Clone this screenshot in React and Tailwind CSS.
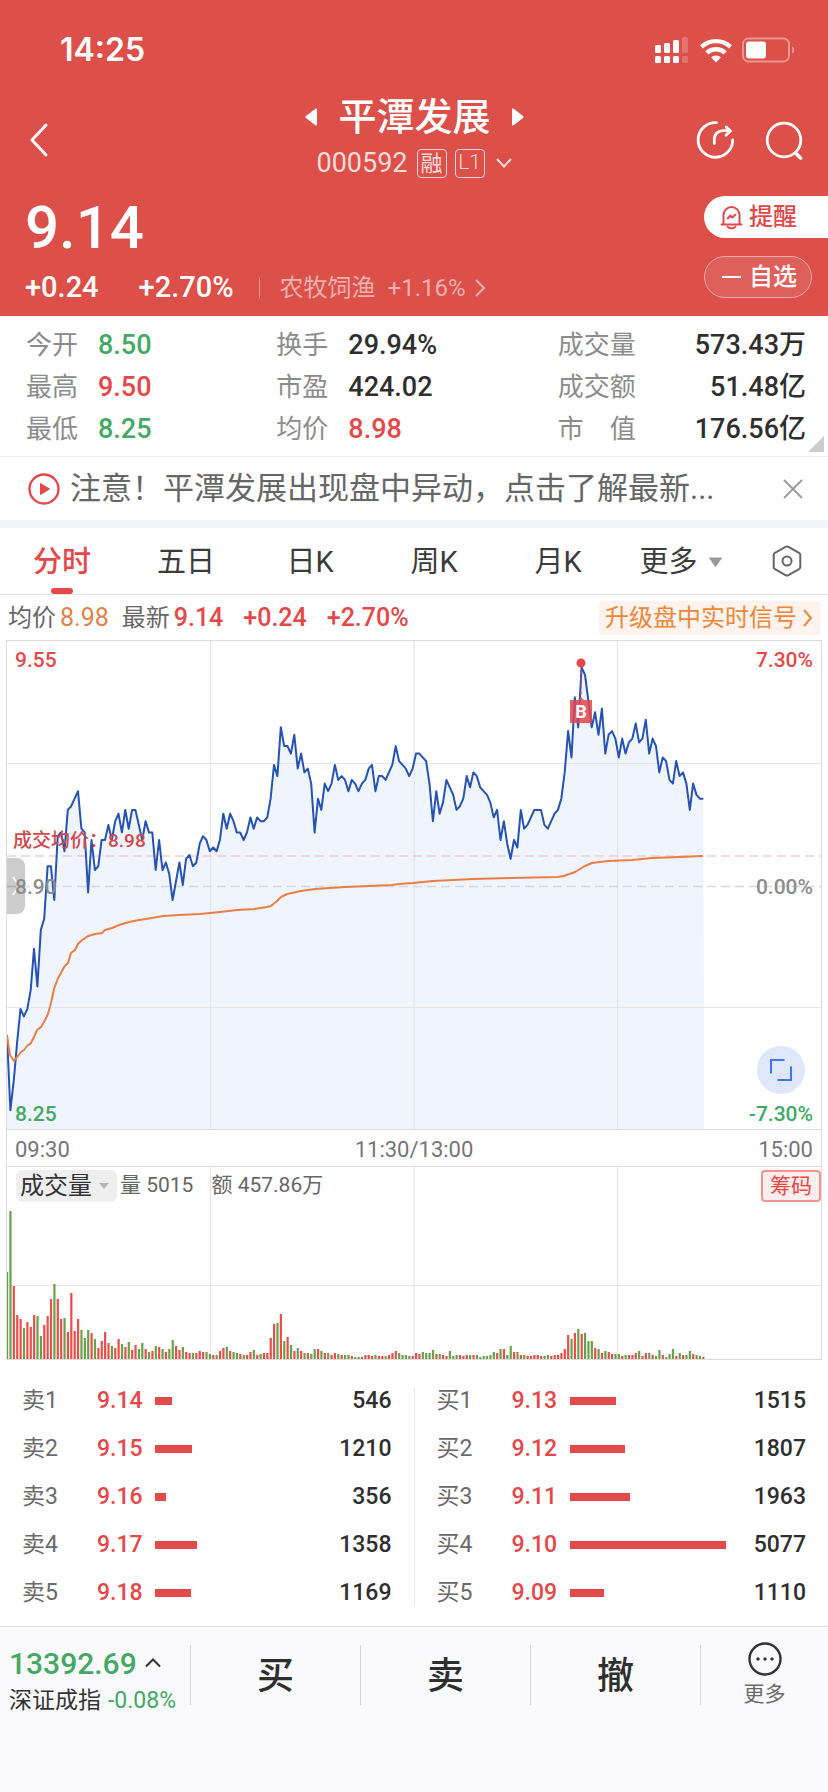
import { useState } from "react";

const CHART_W = 814;
const CHART_H = 488;
const STEP = 3.38;

// minute prices in cents
const prices = [
  850, 830, 838, 848, 857, 855, 857, 862, 873, 863, 878, 881, 895, 895, 886,
  903, 904, 899, 910, 911, 913, 915, 905, 904, 888, 902, 894, 895, 902, 902,
  906, 902, 907, 909, 904, 910, 905, 910, 910, 906, 902, 907, 904, 904, 894,
  902, 894, 896, 893, 886, 891, 896, 890, 897, 898, 895, 896, 901, 903, 902,
  899, 900, 899, 902, 909, 905, 909, 907, 904, 904, 902, 904, 908, 905, 908,
  907, 907, 908, 913, 922, 919, 932, 927, 927, 925, 930, 921, 925, 920, 921,
  917, 904, 913, 910, 917, 915, 917, 922, 918, 919, 918, 915, 918, 917, 915,
  917, 918, 921, 922, 915, 919, 919, 918, 920, 922, 927, 923, 922, 921, 919,
  921, 925, 925, 924, 923, 917, 907, 915, 909, 912, 918, 916, 914, 910, 911,
  913, 919, 916, 920, 919, 916, 915, 914, 912, 908, 910, 902, 907, 901, 897,
  902, 900, 910, 905, 906, 908, 910, 910, 910, 906, 905, 907, 909, 910, 913,
  920, 931, 924, 940, 932, 948, 946, 939, 932, 936, 930, 937, 925, 930, 931,
  929, 924, 929, 925, 928, 929, 933, 928, 929, 934, 925, 929, 927, 920, 924,
  923, 918, 917, 923, 919, 920, 917, 910, 917, 914, 913, 913,
];

const averageLine =
  "0,395 3,414 7,420 14,411 17,409 20,405 24,402 27,396 30,389 34,386 37,381 41,373 44,362 47,348 51,337 54,332 57,326 61,322 64,312 68,309 71,303 74,300 81,295 88,293 95,292 98,289 105,287 112,284 122,281 132,279 139,278 156,275 172,274 193,273 213,271 230,269 247,268 260,266 264,265 270,260 274,256 280,253 294,250 308,248 338,246 362,245 385,244 392,243 406,242 426,240 466,238 503,237 551,236 557,235 568,231 578,225 585,222 601,220 625,219 645,217 672,216 696,215";

// r = up minute, g = down minute
const volumes =
  "g87 g148 r73 r44 r40 g31 r37 r32 r44 g43 g23 r34 r43 r60 g75 r60 r40 g41 r27 r66 r28 r40 g29 g21 g29 r26 g20 r11 r18 r27 r16 g13 r11 r20 g15 r12 g17 r9 r14 g10 g16 r10 g7 r8 g13 r12 g10 r7 g10 g19 r13 r9 g12 r7 r6 g6 r6 r8 r7 g7 g5 r4 g4 r8 r11 g12 r8 g7 g6 r5 g4 r4 r7 g9 r4 g5 r6 r6 r21 r35 g36 r45 g18 r22 g14 r8 g11 r8 g6 r6 g5 g10 r10 g8 r6 g6 r4 r6 g5 r4 g4 g4 r3 g2 g2 r2 r4 r4 r3 g4 r3 r3 g3 r4 r6 r8 g6 g4 g4 g3 r3 r6 r5 g7 g6 g6 g9 r5 g5 r4 r3 g8 g3 g4 r4 r3 r4 g4 r4 g4 g2 g3 g3 g4 g7 r6 g10 r10 g4 g13 r7 g7 r4 g4 r3 r3 r4 r4 r3 g3 g4 r3 r4 r4 r6 r10 r24 g20 r26 g30 r25 g26 g18 g18 r11 g10 r6 g8 r7 r5 g5 g5 r3 g4 r4 r4 r6 g8 r3 r6 g6 r4 g3 g9 r4 g2 g5 g10 r3 g6 r4 g4 g8 r5 g4 g3 r2".split(
    " ",
  );

const stats = [
  { label: "今开", value: "8.50", color: "text-[#43a964]" },
  { label: "换手", value: "29.94%", color: "text-[#2f2f2f]" },
  { label: "成交量", value: "573.43万", color: "text-[#2f2f2f]" },
  { label: "最高", value: "9.50", color: "text-[#e54848]" },
  { label: "市盈", value: "424.02", color: "text-[#2f2f2f]" },
  { label: "成交额", value: "51.48亿", color: "text-[#2f2f2f]" },
  { label: "最低", value: "8.25", color: "text-[#43a964]" },
  { label: "均价", value: "8.98", color: "text-[#e54848]" },
  { label: "市　值", value: "176.56亿", color: "text-[#2f2f2f]" },
];

const sells = [
  { label: "卖1", price: "9.14", amount: 546 },
  { label: "卖2", price: "9.15", amount: 1210 },
  { label: "卖3", price: "9.16", amount: 356 },
  { label: "卖4", price: "9.17", amount: 1358 },
  { label: "卖5", price: "9.18", amount: 1169 },
];

const buys = [
  { label: "买1", price: "9.13", amount: 1515 },
  { label: "买2", price: "9.12", amount: 1807 },
  { label: "买3", price: "9.11", amount: 1963 },
  { label: "买4", price: "9.10", amount: 5077 },
  { label: "买5", price: "9.09", amount: 1110 },
];

function StatusBar() {
  return (
    <div className="flex items-center justify-between pt-7 pl-[60px] pr-8">
      <span className="font-['Inter',sans-serif] text-[32px] leading-[44px] font-semibold">
        14:25
      </span>
      <div className="flex items-center">
        <svg width="34" height="28" viewBox="0 0 34 28" fill="#fff">
          <rect x="0" y="9" width="6" height="8" rx="1.5" />
          <rect x="9" y="7" width="6" height="10" rx="1.5" />
          <rect x="18" y="4" width="6" height="13" rx="1.5" />
          <rect x="27" y="1" width="6" height="16" rx="1.5" opacity=".2" />
          <rect x="0" y="20" width="6" height="7" rx="1.5" />
          <rect x="9" y="20" width="6" height="7" rx="1.5" />
          <rect x="18" y="20" width="6" height="7" rx="1.5" />
          <rect x="27" y="20" width="6" height="7" rx="1.5" opacity=".2" />
        </svg>
        <svg
          className="ml-[10px]"
          width="34"
          height="26"
          viewBox="0 0 34 26"
          fill="#fff"
        >
          <path d="M1 8.2a23.5 23.5 0 0 1 32 0l-2.9 3.4a19 19 0 0 0-26.2 0z" />
          <path d="M6.3 14.2a15.8 15.8 0 0 1 21.4 0l-3 3.4a11.3 11.3 0 0 0-15.4 0z" />
          <path d="M12 20.2a7.8 7.8 0 0 1 10 0l-5 5.3z" />
        </svg>
        <svg
          className="ml-[9px]"
          width="54"
          height="26"
          viewBox="0 0 54 26"
          fill="none"
        >
          <rect
            x="1"
            y="1.5"
            width="46"
            height="23"
            rx="5.5"
            stroke="#fff"
            strokeOpacity=".4"
            strokeWidth="2"
          />
          <rect x="4" y="4.5" width="20" height="17" rx="3" fill="#fff" />
          <path d="M50 9.5c3 .8 3 6.2 0 7z" fill="#fff" opacity=".4" />
        </svg>
      </div>
    </div>
  );
}

function NavBar() {
  return (
    <div className="flex items-center justify-between pt-[22px] pl-7 pr-6">
      <button aria-label="返回" className="w-[105px]">
        <svg width="22" height="36" viewBox="0 0 22 36" fill="none">
          <path
            d="M18 3L4 18l14 15"
            stroke="#fff"
            strokeWidth="3"
            strokeLinecap="round"
            strokeLinejoin="round"
          />
        </svg>
      </button>
      <div className="flex flex-col items-center">
        <div className="flex items-center gap-5">
          <button aria-label="上一个">
            <svg width="13" height="18" viewBox="0 0 13 18" fill="#fff">
              <path d="M12 1.5v15a1 1 0 0 1-1.7.7L1 10a1.3 1.3 0 0 1 0-2L10.3.8A1 1 0 0 1 12 1.5z" />
            </svg>
          </button>
          <h1 className="text-[38px] leading-[46px] font-medium">平潭发展</h1>
          <button aria-label="下一个">
            <svg width="13" height="18" viewBox="0 0 13 18" fill="#fff">
              <path d="M1 1.5v15a1 1 0 0 0 1.7.7L12 10a1.3 1.3 0 0 0 0-2L2.7.8A1 1 0 0 0 1 1.5z" />
            </svg>
          </button>
        </div>
        <div className="flex h-[46px] items-center text-[#f8dcda]">
          <span className="text-[27px]">000592</span>
          <span className="ml-[9px] flex h-[29px] w-[30px] items-center justify-center rounded-sm border border-[#f6d2d0] text-[22px]">
            融
          </span>
          <span className="ml-2 flex h-[29px] w-[30px] items-center justify-center rounded-sm border border-[#f6d2d0] text-[21px] font-light">
            L1
          </span>
          <svg
            className="ml-[10px]"
            width="18"
            height="12"
            viewBox="0 0 18 12"
            fill="none"
          >
            <path d="M2 2l7 7.5L16 2" stroke="#f8dcda" strokeWidth="2" />
          </svg>
        </div>
      </div>
      <div className="flex items-center gap-[30px]">
        <button aria-label="分享">
          <svg
            width="39"
            height="40"
            viewBox="0 0 39 40"
            fill="none"
            stroke="#fff"
            strokeWidth="2.8"
            strokeLinecap="round"
            strokeLinejoin="round"
          >
            <path d="M20.5 2.7a17.3 17.3 0 1 0 16.2 17.2" />
            <path d="M18.3 23.5v-4c0-5.500 3.500-8.800 9-8.800h6" />
            <path d="M30.2 7l4.3 4-4.5 4.300" />
          </svg>
        </button>
        <button aria-label="搜索">
          <svg
            width="39"
            height="40"
            viewBox="0 0 39 40"
            fill="none"
            stroke="#fff"
            strokeLinecap="round"
          >
            <circle cx="19" cy="20" r="16.8" strokeWidth="2.8" />
            <path d="M31 33.5l4.500 4.500" strokeWidth="3.6" />
          </svg>
        </button>
      </div>
    </div>
  );
}

function PriceSummary() {
  return (
    <div className="flex items-start justify-between pb-[2px]">
      <div className="pt-2 pl-[25px]">
        <div className="text-[60px] leading-[68px] font-medium">9.14</div>
        <div className="flex h-[52px] items-center text-[29px] font-medium">
          <span>+0.24</span>
          <span className="ml-10">+2.70%</span>
          <span className="ml-[25px] h-5 w-px bg-[#eb9b97]"></span>
          <a
            href="#sector"
            className="ml-5 flex items-center text-2xl font-normal text-[#f0b1ae]"
          >
            <span>农牧饲渔</span>
            <span className="ml-3">+1.16%</span>
            <svg
              className="ml-2"
              width="12"
              height="20"
              viewBox="0 0 12 20"
              fill="none"
            >
              <path d="M2 2l8 8-8 8" stroke="#f0b1ae" strokeWidth="2" />
            </svg>
          </a>
        </div>
      </div>
      <div className="flex flex-col gap-[18px] pt-[10px]">
        <button className="flex h-[42px] w-[124px] items-center gap-[6px] rounded-l-full bg-white pl-4 text-2xl font-medium text-[#e0484a]">
          <svg
            width="23"
            height="25"
            viewBox="0 0 23 25"
            fill="none"
            stroke="#e0484a"
            strokeWidth="2"
            strokeLinecap="round"
            strokeLinejoin="round"
          >
            <path d="M1.5 19.5h20M3.5 19V10a8 8 0 0 1 16 0v9" />
            <path d="M7.5 21.5c1.5 2.6 6.5 2.6 8 0" />
            <path d="M7.8 13.5l2.5-3 2 2 3-2.8" />
          </svg>
          提醒
        </button>
        <button className="flex h-[42px] w-[108px] items-center gap-2 rounded-full border border-[#eea9a6] bg-[#df605b] pl-[17px] text-2xl font-medium">
          <span className="h-[2px] w-[19px] bg-white"></span>
          自选
        </button>
      </div>
    </div>
  );
}

function Stats() {
  return (
    <div className="relative border-b border-[#ececec] pt-2 pb-[6px] pl-[26px] pr-[22px]">
      <dl className="grid grid-cols-[250fr_281fr_248fr]">
        {stats.map((stat, i) => (
          <div
            key={stat.label}
            className={`flex h-[42px] items-center ${i % 3 === 2 ? "justify-between" : "gap-5"}`}
          >
            <dt className="text-[26px] text-[#8c8c8c]">{stat.label}</dt>
            <dd className={`text-[27px] font-medium ${stat.color}`}>
              {stat.value}
            </dd>
          </div>
        ))}
      </dl>
      <svg
        className="absolute right-1 bottom-1"
        width="16"
        height="16"
        viewBox="0 0 16 16"
      >
        <path d="M16 0v16H0z" fill="#ccc" />
      </svg>
    </div>
  );
}

function Notice({ onClose }) {
  return (
    <div className="flex h-[63px] items-center pl-7 pr-[25px]">
      <svg width="32" height="32" viewBox="0 0 32 32" fill="none">
        <circle cx="16" cy="16" r="14.5" stroke="#e54848" strokeWidth="2.4" />
        <path d="M12.5 10.5v11l9-5.5z" fill="#e54848" stroke="#e54848" />
      </svg>
      <p className="ml-[10px] min-w-0 flex-1 truncate text-[31px] leading-[44px] text-[#666]">
        注意！平潭发展出现盘中异动，点击了解最新...
      </p>
      <button aria-label="关闭" onClick={onClose}>
        <svg width="20" height="20" viewBox="0 0 20 20" fill="none">
          <path d="M1 1l18 18M19 1L1 19" stroke="#999" strokeWidth="1.8" />
        </svg>
      </button>
    </div>
  );
}

function Tabs() {
  const [active, setActive] = useState("分时");
  return (
    <nav className="grid h-[67px] grid-cols-[repeat(5,124fr)_122fr_86fr] border-b border-[#e2e2e2]">
      {["分时", "五日", "日K", "周K", "月K"].map((tab) => (
        <button
          key={tab}
          onClick={() => setActive(tab)}
          className={`relative pt-[3px] text-[29px] ${active === tab ? "font-medium text-[#e54848]" : "text-[#3c3c3c]"}`}
        >
          {tab}
          {active === tab && (
            <span className="absolute bottom-0 left-1/2 h-[6px] w-[22px] -translate-x-1/2 rounded-sm bg-[#e54848]"></span>
          )}
        </button>
      ))}
      <button className="flex items-center justify-center gap-[10px] pt-[3px] text-[29px] text-[#3c3c3c]">
        更多
        <svg width="15" height="11" viewBox="0 0 15 11">
          <path
            d="M1.5 1h12L7.5 9.5z"
            fill="#999"
            stroke="#999"
            strokeLinejoin="round"
          />
        </svg>
      </button>
      <button
        aria-label="设置"
        className="flex items-center justify-center pl-[3px]"
      >
        <svg
          width="30"
          height="32"
          viewBox="0 0 30 32"
          fill="none"
          stroke="#666"
          strokeWidth="2"
        >
          <path
            d="M13.5 1.9a3 3 0 0 1 3 0l10.500 6a2.500 2.500 0 0 1 1.300 2.200v11.800a2.500 2.500 0 0 1-1.300 2.200l-10.500 6a3 3 0 0 1-3 0L3 24.1a2.500 2.500 0 0 1-1.300-2.200V10.1A2.500 2.500 0 0 1 3 7.900z"
            strokeLinejoin="round"
          />
          <circle cx="15" cy="16" r="4.5" />
        </svg>
      </button>
    </nav>
  );
}

function PriceChart() {
  const line = prices
    .map(
      (p, i) =>
        `${(i * STEP).toFixed(1)},${(((955 - p) * CHART_H) / 130).toFixed(1)}`,
    )
    .join(" ");
  const lastX = (prices.length - 1) * STEP + 1;
  return (
    <div className="relative border border-[#dcdcdc] text-[21px] leading-6 font-medium">
      <svg viewBox={`0 0 ${CHART_W} ${CHART_H}`} className="block w-full">
        <polygon
          points={`0,${CHART_H} ${line} ${lastX},${CHART_H}`}
          fill="#eff4fd"
        />
        <g stroke="#e6e6e8" strokeWidth="1.2">
          <path d="M0 122.5h814M0 366.5h814M203.5 0v488M407 0v488M610.5 0v488" />
        </g>
        <path
          d="M0 245.5h814"
          stroke="#d3dae6"
          strokeWidth="1.6"
          strokeDasharray="9 5"
        />
        <path
          d="M0 215h814"
          stroke="#f1cdd2"
          strokeWidth="1.6"
          strokeDasharray="9 5"
        />
        <polyline
          points={line}
          fill="none"
          stroke="#2552b5"
          strokeWidth="2"
          strokeLinejoin="round"
        />
        <polyline
          points={averageLine}
          fill="none"
          stroke="#ec7d45"
          strokeWidth="2"
          strokeLinejoin="round"
        />
        <path d="M574 22v36" stroke="#e54848" strokeDasharray="4 3" />
        <circle cx="574" cy="22" r="4.5" fill="#e54848" />
        <path
          d="M563 59h8l3-3 3 3h8v23h-22z"
          fill="#e2474e"
          fillOpacity=".85"
        />
        <text
          x="574"
          y="77"
          textAnchor="middle"
          fill="#fff"
          fontSize="18"
          fontWeight="700"
        >
          B
        </text>
      </svg>
      <span className="absolute top-[7px] left-2 text-[#e54848]">9.55</span>
      <span className="absolute top-[7px] right-2 text-[#e54848]">7.30%</span>
      <span className="absolute top-[188px] left-[6px] text-[19px] text-[#d0484c]">
        成交均价：8.98
      </span>
      <button
        aria-label="展开"
        className="absolute top-[217px] left-0 flex h-14 w-[18px] items-center justify-center rounded-r-lg bg-black/20"
      >
        <svg width="8" height="20" viewBox="0 0 8 20" fill="none">
          <path d="M1 1l6 9-6 9" stroke="#fff" strokeWidth="1.5" />
        </svg>
      </button>
      <span className="absolute top-[234px] left-2 text-[#8c8c8c]">8.90</span>
      <span className="absolute top-[234px] right-2 text-[#8c8c8c]">
        0.00%
      </span>
      <button
        aria-label="全屏"
        className="absolute right-4 bottom-[35px] flex h-12 w-12 items-center justify-center rounded-full bg-[#dfe7fb]"
      >
        <svg
          width="22"
          height="22"
          viewBox="0 0 22 22"
          fill="none"
          stroke="#3c78f5"
          strokeWidth="2"
        >
          <path d="M1 14.5V1h13.500M21 7.500V21H7.500" />
        </svg>
      </button>
      <span className="absolute bottom-[3px] left-2 text-[#43a964]">8.25</span>
      <span className="absolute right-2 bottom-[3px] text-[#43a964]">
        -7.30%
      </span>
    </div>
  );
}

function VolumeChart() {
  return (
    <div className="relative border border-t-0 border-[#dcdcdc]">
      <svg viewBox={`0 0 ${CHART_W} 192`} className="block w-full">
        <path
          d="M0 118.5h814M203.5 0v192M407 0v192M610.5 0v192"
          stroke="#e6e6e8"
          strokeWidth="1.2"
        />
        {volumes.map((v, i) => {
          const height = Number(v.slice(1));
          return (
            <rect
              key={i}
              x={i * STEP - 1}
              y={192 - height}
              width="2.2"
              height={height}
              fill={v[0] === "g" ? "#6aa04a" : "#e94f4a"}
            />
          );
        })}
      </svg>
      <div className="absolute top-[3px] right-0 left-[9px] flex h-8 items-center text-[21px] text-[#666]">
        <button className="flex h-8 items-center gap-[7px] rounded-md bg-[#efefef] pr-2 pl-1 text-2xl text-[#333]">
          成交量
          <svg width="10" height="6" viewBox="0 0 10 6">
            <path d="M0 0h10L5 6z" fill="#b5b5b5" />
          </svg>
        </button>
        <span className="ml-[3px]">量 5015</span>
        <span className="ml-[18px]">额 457.86万</span>
        <button className="ml-auto h-8 w-[60px] rounded-sm border-2 border-[#f09492] bg-[#fdeeee] leading-7 text-[#ea4540]">
          筹码
        </button>
      </div>
    </div>
  );
}

function OrderTable({ orders, title }) {
  return (
    <div className="flex-1 px-[22px]">
      <table aria-label={title} className="w-full table-fixed">
        <colgroup>
          <col className="w-[75px]" />
          <col className="w-[58px]" />
          <col />
          <col className="w-20" />
        </colgroup>
        <tbody>
          {orders.map((order) => (
            <tr key={order.label} className="h-12 text-[23px]">
              <th className="text-left font-normal text-[#6a6a6a]">
                {order.label}
              </th>
              <td className="font-medium text-[#e54848]">{order.price}</td>
              <td>
                <div
                  className="h-2 bg-[#e24b4b]"
                  style={{ width: `${(order.amount / 5077) * 100}%` }}
                ></div>
              </td>
              <td className="text-right font-medium text-[#2f2f2f]">
                {order.amount}
              </td>
            </tr>
          ))}
        </tbody>
      </table>
    </div>
  );
}

function BottomBar() {
  return (
    <footer className="flex flex-1 items-start border-t border-[#dcdcdc] bg-[#fafafc] pt-[18px]">
      <button className="w-[190px] pl-[9px] text-left whitespace-nowrap">
        <div className="flex h-9 items-center gap-2 text-[30px] font-medium text-[#43a964]">
          13392.69
          <svg width="16" height="10" viewBox="0 0 16 10" fill="none">
            <path d="M1 8.5L8 1.5l7 7" stroke="#333" strokeWidth="2" />
          </svg>
        </div>
        <div className="flex h-10 items-center gap-[7px] text-[23px] text-[#333]">
          深证成指
          <span className="text-[#43a964]">-0.08%</span>
        </div>
      </button>
      {["买", "卖", "撤"].map((action) => (
        <button
          key={action}
          className="h-[60px] flex-1 border-l border-[#d8d8da] pt-[3px] text-[37px] font-medium text-[#2f2f2f]"
        >
          {action}
        </button>
      ))}
      <button className="flex h-[60px] w-32 flex-col items-center justify-center gap-1 border-l border-[#d8d8da] text-[21px] leading-7 text-[#6a6a6a]">
        <svg
          className="shrink-0"
          width="34"
          height="34"
          viewBox="0 0 34 34"
          fill="none"
        >
          <circle cx="17" cy="17" r="15.5" stroke="#333" strokeWidth="2.4" />
          <circle cx="10" cy="17" r="1.7" fill="#333" />
          <circle cx="17" cy="17" r="1.7" fill="#333" />
          <circle cx="24" cy="17" r="1.7" fill="#333" />
        </svg>
        更多
      </button>
    </footer>
  );
}

export default function App() {
  const [showNotice, setShowNotice] = useState(true);
  return (
    <div className="flex min-h-screen flex-col bg-white font-['Roboto','Noto_Sans_CJK_SC',sans-serif]">
      <header className="bg-[#dc5049] text-white">
        <StatusBar />
        <NavBar />
        <PriceSummary />
      </header>
      <Stats />
      {showNotice && <Notice onClose={() => setShowNotice(false)} />}
      <div className="h-2 bg-[#f2f3f9]"></div>
      <Tabs />
      <main>
        <div className="flex h-[45px] items-center pr-[7px] pl-2 text-2xl text-[#666]">
          <span>均价</span>
          <span className="ml-1 text-[25px] text-[#e0824c]">8.98</span>
          <span className="ml-[13px]">最新</span>
          <div className="ml-1 flex gap-5 text-[25px] font-medium text-[#e54848]">
            <span>9.14</span>
            <span>+0.24</span>
            <span>+2.70%</span>
          </div>
          <a
            href="#signal"
            className="ml-auto flex h-[34px] items-center gap-[6px] rounded-sm bg-[#fef4ed] pr-2 pl-[6px] text-[#ee863a]"
          >
            升级盘中实时信号
            <svg width="10" height="18" viewBox="0 0 10 18" fill="none">
              <path d="M1 1l7 8-7 8" stroke="#ee863a" strokeWidth="2" />
            </svg>
          </a>
        </div>
        <div className="px-[6px]">
          <PriceChart />
          <div className="flex h-[37px] items-center justify-between border-x border-b border-[#dcdcdc] px-2 pt-[3px] text-[22px] text-[#757575]">
            <span>09:30</span>
            <span>11:30/13:00</span>
            <span>15:00</span>
          </div>
          <VolumeChart />
        </div>
        <div className="flex pt-[17px] pb-[9px]">
          <OrderTable orders={sells} title="卖盘" />
          <div className="my-[11px] w-px bg-[#e8e8e8]"></div>
          <OrderTable orders={buys} title="买盘" />
        </div>
      </main>
      <BottomBar />
    </div>
  );
}
